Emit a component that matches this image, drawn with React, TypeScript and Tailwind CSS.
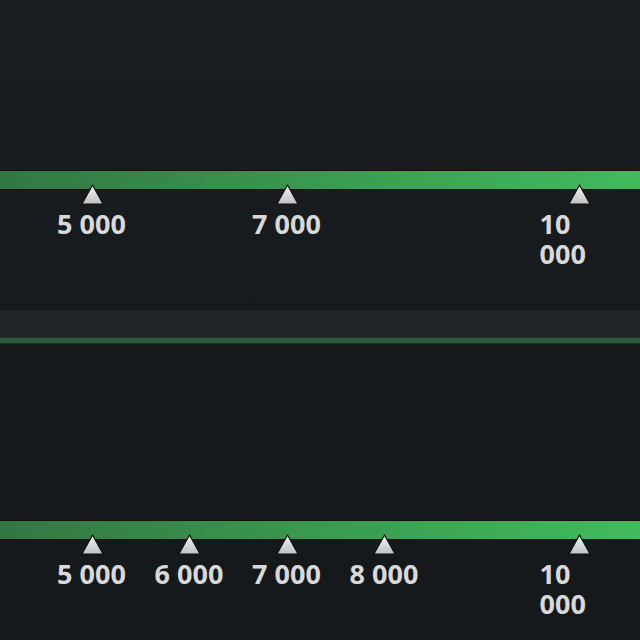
import React from "react";

type ScaleProps = { marks: number[] };

// horizontal position of a value on the visible stretch of the slider track
const toX = (v: number) => 92 + (v - 5000) * 0.0975;

const fmt = (v: number) => v.toLocaleString("fr-FR").replace(/\u202f|\u00a0/g, " ");

function Marker() {
  return (
    <svg width="23" height="21" viewBox="0 0 23 21" className="block">
      <defs>
        <linearGradient id="mk" x1="0" y1="0" x2="0" y2="1">
          <stop offset="0" stopColor="#f2f2f2" />
          <stop offset="1" stopColor="#c2c2c2" />
        </linearGradient>
      </defs>
      <path d="M11.5 1 L22 20 L1 20 Z" fill="url(#mk)" stroke="#0e1012" strokeWidth="1.2" strokeLinejoin="round" />
    </svg>
  );
}

function Scale({ marks }: ScaleProps) {
  return (
    <div className="relative h-[100px]">
      <div className="h-[20px] border-y border-[#0e1012] bg-gradient-to-r from-[#337743] via-[#3a9a50] to-[#43ba5e]" />
      {marks.map((m) => {
        const x = toX(m);
        const last = m >= 10000;
        return (
          <React.Fragment key={m}>
            <div className="absolute top-[14px]" style={{ left: x - 11.5 }}>
              <Marker />
            </div>
            {last ? (
              <div
                className="absolute top-[39px] w-[58px] text-left text-[27px] leading-[30px] font-bold text-[#d9d9d9]"
                style={{ left: x - 40 }}
              >
                {fmt(m)}
              </div>
            ) : (
              <div
                className="absolute top-[39px] w-[100px] text-center whitespace-nowrap text-[27px] leading-[30px] font-bold text-[#d9d9d9]"
                style={{ left: x - 50.5 }}
              >
                {fmt(m)}
              </div>
            )}
          </React.Fragment>
        );
      })}
    </div>
  );
}

export default function App() {
  return (
    <div className="w-[640px] h-[640px] overflow-hidden flex flex-col font-['Open_Sans',sans-serif]">
      <section className="h-[310px] shrink-0 bg-gradient-to-b from-[#1c1f22] to-[#171a1d] pt-[170px]">
        <Scale marks={[5000, 7000, 10000]} />
      </section>
      <div className="h-[27px] shrink-0 bg-[#202427] border-t border-[#1d2124]" />
      <div className="h-[7px] shrink-0 bg-[#2c5a37] border-y border-[#1c3121]" />
      <section className="flex-1 bg-[#16191c] pt-[176px]">
        <Scale marks={[5000, 6000, 7000, 8000, 10000]} />
      </section>
    </div>
  );
}
